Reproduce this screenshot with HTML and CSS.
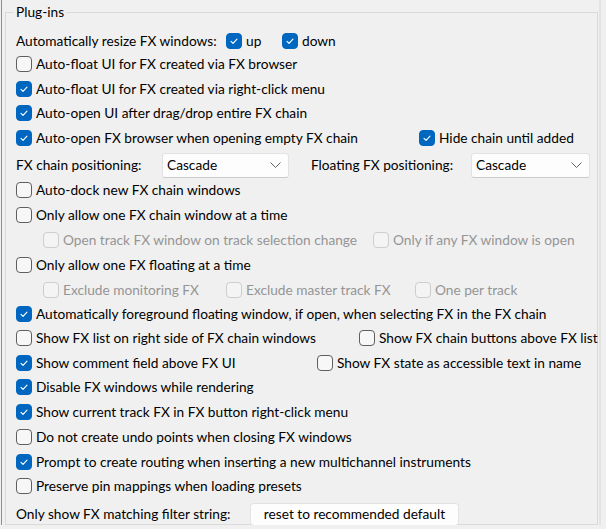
FILE: index.html
```html
<!DOCTYPE html>
<html>
<head>
<meta charset="utf-8">
<link rel="stylesheet" href="styles.css">
</head>
<body>
<div class="window">
<fieldset class="group">
<legend>Plug-ins</legend>

<div class="row first">
  <span class="cell w-resize">Automatically resize FX windows:</span>
  <label class="cb w-up"><span class="box on"><svg viewBox="0 0 16 16"><path d="M4.6 8.4l2.3 2.3 4.5-4.8"/></svg></span>up</label>
  <label class="cb"><span class="box on"><svg viewBox="0 0 16 16"><path d="M4.6 8.4l2.3 2.3 4.5-4.8"/></svg></span>down</label>
</div>

<div class="row">
  <label class="cb"><span class="box"></span>Auto-float UI for FX created via FX browser</label>
</div>

<div class="row">
  <label class="cb"><span class="box on"><svg viewBox="0 0 16 16"><path d="M4.6 8.4l2.3 2.3 4.5-4.8"/></svg></span>Auto-float UI for FX created via right-click menu</label>
</div>

<div class="row">
  <label class="cb"><span class="box on"><svg viewBox="0 0 16 16"><path d="M4.6 8.4l2.3 2.3 4.5-4.8"/></svg></span>Auto-open UI after drag/drop entire FX chain</label>
</div>

<div class="row">
  <label class="cb w-autoopen"><span class="box on"><svg viewBox="0 0 16 16"><path d="M4.6 8.4l2.3 2.3 4.5-4.8"/></svg></span>Auto-open FX browser when opening empty FX chain</label>
  <label class="cb"><span class="box on"><svg viewBox="0 0 16 16"><path d="M4.6 8.4l2.3 2.3 4.5-4.8"/></svg></span>Hide chain until added</label>
</div>

<div class="row drop">
  <span class="cell w-chainpos">FX chain positioning:</span>
  <div class="select w-sel1"><span>Cascade</span><svg class="chev" viewBox="0 0 11 6"><path d="M0.5 0.5l5 5 5-5"/></svg></div>
  <span class="cell w-floatpos">Floating FX positioning:</span>
  <div class="select w-sel2"><span>Cascade</span><svg class="chev" viewBox="0 0 11 6"><path d="M0.5 0.5l5 5 5-5"/></svg></div>
</div>

<div class="row">
  <label class="cb"><span class="box"></span>Auto-dock new FX chain windows</label>
</div>

<div class="row">
  <label class="cb"><span class="box"></span>Only allow one FX chain window at a time</label>
</div>

<div class="row sub">
  <label class="cb dis w-opentrack"><span class="box"></span>Open track FX window on track selection change</label>
  <label class="cb dis"><span class="box"></span>Only if any FX window is open</label>
</div>

<div class="row">
  <label class="cb"><span class="box"></span>Only allow one FX floating at a time</label>
</div>

<div class="row sub sub2">
  <label class="cb dis w-exmon"><span class="box"></span>Exclude monitoring FX</label>
  <label class="cb dis w-exmaster"><span class="box"></span>Exclude master track FX</label>
  <label class="cb dis"><span class="box"></span>One per track</label>
</div>

<div class="row">
  <label class="cb"><span class="box on"><svg viewBox="0 0 16 16"><path d="M4.6 8.4l2.3 2.3 4.5-4.8"/></svg></span>Automatically foreground floating window, if open, when selecting FX in the FX chain</label>
</div>

<div class="row">
  <label class="cb w-fxlist"><span class="box"></span>Show FX list on right side of FX chain windows</label>
  <label class="cb"><span class="box"></span>Show FX chain buttons above FX list</label>
</div>

<div class="row">
  <label class="cb w-comment"><span class="box on"><svg viewBox="0 0 16 16"><path d="M4.6 8.4l2.3 2.3 4.5-4.8"/></svg></span>Show comment field above FX UI</label>
  <label class="cb"><span class="box"></span>Show FX state as accessible text in name</label>
</div>

<div class="row">
  <label class="cb"><span class="box on"><svg viewBox="0 0 16 16"><path d="M4.6 8.4l2.3 2.3 4.5-4.8"/></svg></span>Disable FX windows while rendering</label>
</div>

<div class="row">
  <label class="cb"><span class="box on"><svg viewBox="0 0 16 16"><path d="M4.6 8.4l2.3 2.3 4.5-4.8"/></svg></span>Show current track FX in FX button right-click menu</label>
</div>

<div class="row tall">
  <label class="cb"><span class="box"></span>Do not create undo points when closing FX windows</label>
</div>

<div class="row">
  <label class="cb"><span class="box on"><svg viewBox="0 0 16 16"><path d="M4.6 8.4l2.3 2.3 4.5-4.8"/></svg></span>Prompt to create routing when inserting a new multichannel instruments</label>
</div>

<div class="row">
  <label class="cb"><span class="box"></span>Preserve pin mappings when loading presets</label>
</div>

<div class="row last">
  <span class="cell w-filter">Only show FX matching filter string:</span>
  <button class="btn">reset to recommended default</button>
</div>

</fieldset>
</div>
</body>
</html>
```

FILE: styles.css
```css
html, body {
  margin: 0;
  padding: 0;
  background: #f0f0f0;
}

body {
  font-family: "Lato", "Liberation Sans", sans-serif;
  font-size: 13.7px;
  line-height: 18px;
  color: #000;
}

.window {
  box-sizing: border-box;
  margin-left: 1px;
  width: 600px;
  height: 525px;
  border-left: 1px solid #8f8f8f;
  border-right: 2px solid #e4e4e4;
  padding-top: 3px;
}

.group {
  box-sizing: border-box;
  margin: 0 0 0 3px;
  width: 593px;
  height: 522px;
  border: 1px solid #dadada;
  padding: 9px 0 0 10px;
  min-width: 0;
}

.group legend {
  padding: 0 2px;
  margin-left: -2px;
  line-height: 18px;
  color: #000;
}

.row {
  box-sizing: border-box;
  display: flex;
  align-items: center;
  height: 24.5px;
  white-space: nowrap;
}

.row.first { height: 22px; }
.row.drop { height: 28px; padding-top: 2px; }
.row.sub { height: 26px; padding-left: 27px; }
.row.sub2 { height: 24px; }
.row.tall { height: 25.5px; padding-top: 1px; }
.row.last { height: 28px; padding-top: 3px; }

.cell {
  flex: none;
}

.cb {
  display: flex;
  align-items: center;
  gap: 4px;
  flex: none;
}

.box {
  box-sizing: border-box;
  width: 16px;
  height: 16px;
  border: 1px solid #5f5f5f;
  border-radius: 4px;
  background: #f7f7f7;
  flex: none;
  display: flex;
}

.box.on {
  background: #0067c0;
  border-color: #0067c0;
}

.box svg {
  width: 14px;
  height: 14px;
}

.box svg path {
  fill: none;
  stroke: #fff;
  stroke-width: 1.3;
  stroke-linecap: round;
  stroke-linejoin: round;
}

.cb.dis {
  color: #959595;
}

.cb.dis .box {
  border-color: #cdcdcd;
  background: #f4f4f4;
}

.w-resize { width: 210px; }
.w-up { width: 56px; }
.w-autoopen { width: 403px; }
.w-chainpos { width: 146px; }
.w-sel1 { width: 127px; margin-right: 22px; }
.w-floatpos { width: 160px; }
.w-sel2 { width: 119px; }
.w-opentrack { width: 330px; }
.w-exmon { width: 183px; }
.w-exmaster { width: 189px; }
.w-fxlist { width: 343px; }
.w-comment { width: 301px; }
.w-filter { width: 234px; }

.select {
  box-sizing: border-box;
  flex: none;
  height: 25px;
  display: flex;
  align-items: center;
  justify-content: space-between;
  padding: 0 7px 0 4px;
  background: #fdfdfd;
  border: 1px solid #e2e2e2;
  border-bottom-color: #cbcbcb;
  border-radius: 3px;
}

.chev {
  width: 11px;
  height: 6px;
}

.chev path {
  fill: none;
  stroke: #616161;
  stroke-width: 1;
}

.btn {
  box-sizing: border-box;
  flex: none;
  width: 209px;
  height: 23px;
  padding: 0;
  font: inherit;
  color: #000;
  background: #fdfdfd;
  border: 1px solid #e3e3e3;
  border-bottom-color: #cccccc;
  border-radius: 4px;
}
```
